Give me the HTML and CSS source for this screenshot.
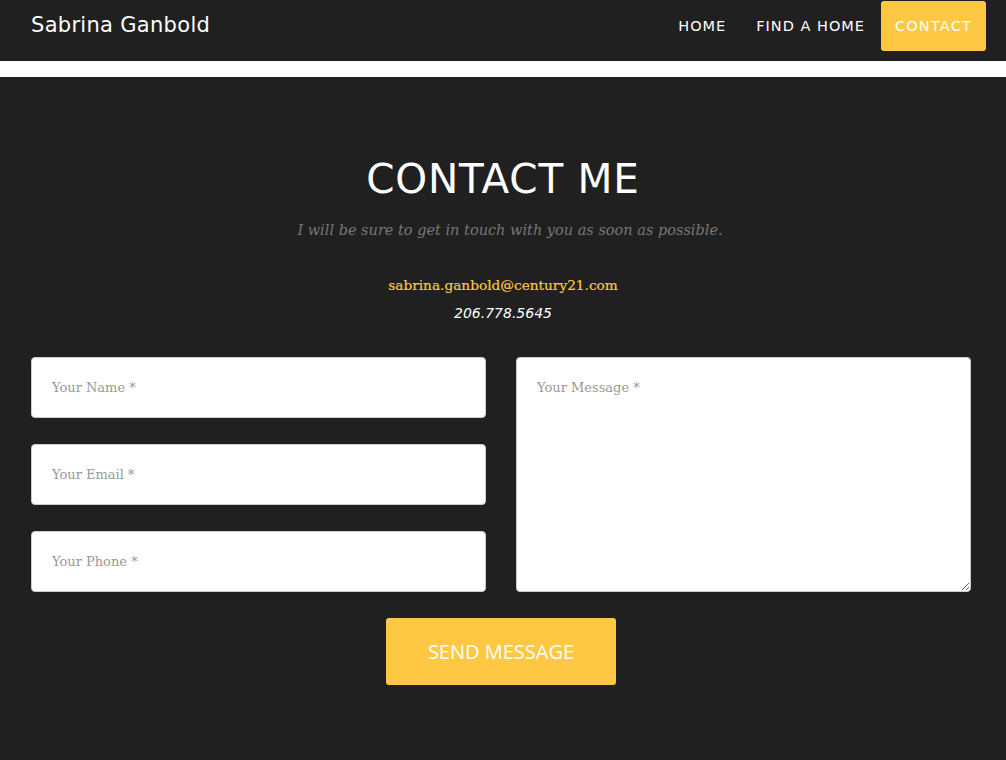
FILE: index.html
```html
<!DOCTYPE html>
<html>
<head>
<meta charset="utf-8">
<link rel="stylesheet" href="styles.css">
</head>
<body>
<header class="navbar">
  <div class="brand">Sabrina Ganbold</div>
  <nav class="nav">
    <a class="nav-link" href="#">HOME</a>
    <a class="nav-link" href="#">FIND A HOME</a>
    <a class="nav-link active" href="#">CONTACT</a>
  </nav>
</header>
<div class="strip"></div>
<section class="contact">
  <h2 class="title">CONTACT ME</h2>
  <p class="subtitle">I will be sure to get in touch with you as soon as possible.</p>
  <p class="email">sabrina.ganbold@century21.com</p>
  <p class="phone">206.778.5645</p>
  <form class="form">
    <div class="col">
      <input class="field" type="text" placeholder="Your Name *">
      <input class="field" type="email" placeholder="Your Email *">
      <input class="field" type="tel" placeholder="Your Phone *">
    </div>
    <div class="col">
      <textarea class="field message" placeholder="Your Message *"></textarea>
    </div>
  </form>
  <div class="actions">
    <button class="send" type="button">SEND MESSAGE</button>
  </div>
</section>
</body>
</html>
```
FILE: styles.css
```css
* { box-sizing: border-box; }
html, body { margin: 0; padding: 0; }
body {
  background: #202020;
  font-family: "DejaVu Sans", "Liberation Sans", sans-serif;
  height: 760px;
  overflow: hidden;
}
.navbar {
  height: 61px;
  background: #202020;
  display: flex;
  align-items: flex-start;
  justify-content: space-between;
  padding: 0 20px 0 31px;
}
.brand {
  color: #fff;
  font-family: "DejaVu Sans", sans-serif;
  font-size: 21px;
  line-height: 51px;
  letter-spacing: 0.3px;
}
.nav {
  display: flex;
  align-items: flex-start;
  padding-top: 1px;
}
.nav-link {
  color: #fff;
  text-decoration: none;
  font-family: "DejaVu Sans", sans-serif;
  font-size: 14.5px;
  letter-spacing: 1px;
  line-height: 50px;
  padding: 0 15px;
  border-radius: 3px;
}
.nav-link.active {
  background: #fec844;
  margin-left: 1px;
  width: 105px;
  text-align: center;
  padding: 0;
  letter-spacing: 1.2px;
}
.strip {
  height: 16px;
  background: #fff;
}
.contact {
  padding-top: 79px;
  text-align: center;
}
.title {
  margin: 0;
  color: #fff;
  font-family: "DejaVu Sans", sans-serif;
  font-weight: normal;
  font-size: 40.5px;
  line-height: 46px;
  letter-spacing: 0.8px;
}
.subtitle {
  margin: 17px 0 0;
  color: #777;
  font-family: "DejaVu Serif", serif;
  font-style: italic;
  font-size: 14.5px;
  line-height: 22px;
  padding-left: 14px;
}
.email {
  margin: 33px 0 0;
  color: #fec844;
  font-family: "DejaVu Serif", serif;
  font-size: 13.7px;
  line-height: 22px;
  -webkit-text-stroke: 0.2px #fec844;
}
.phone {
  margin: 6px 0 0;
  color: #fff;
  font-family: "DejaVu Sans", sans-serif;
  font-style: italic;
  font-size: 14px;
  line-height: 22px;
}
.form {
  width: 940px;
  margin: 33px 0 0 31px;
  display: grid;
  grid-template-columns: 1fr 1fr;
  column-gap: 30px;
  text-align: left;
}
.col {
  display: flex;
  flex-direction: column;
  gap: 26px;
}
.field {
  display: block;
  width: 100%;
  height: 61px;
  border: 1px solid #ccc;
  border-radius: 4px;
  background: #fff;
  padding: 0 20px;
  font-family: "DejaVu Serif", serif;
  font-size: 13px;
  color: #555;
  outline: none;
}
.field::placeholder { color: #999; }
.message {
  height: 235px;
  padding: 21px 20px;
  resize: vertical;
  line-height: 18px;
}
.actions {
  width: 940px;
  margin: 26px 0 0 31px;
  display: flex;
  justify-content: center;
}
.send {
  width: 230px;
  height: 67px;
  border: none;
  border-radius: 3px;
  background: #fec844;
  color: #fff;
  font-family: "Open Sans", "DejaVu Sans", sans-serif;
  font-size: 20px;
  letter-spacing: 0;
}
```
